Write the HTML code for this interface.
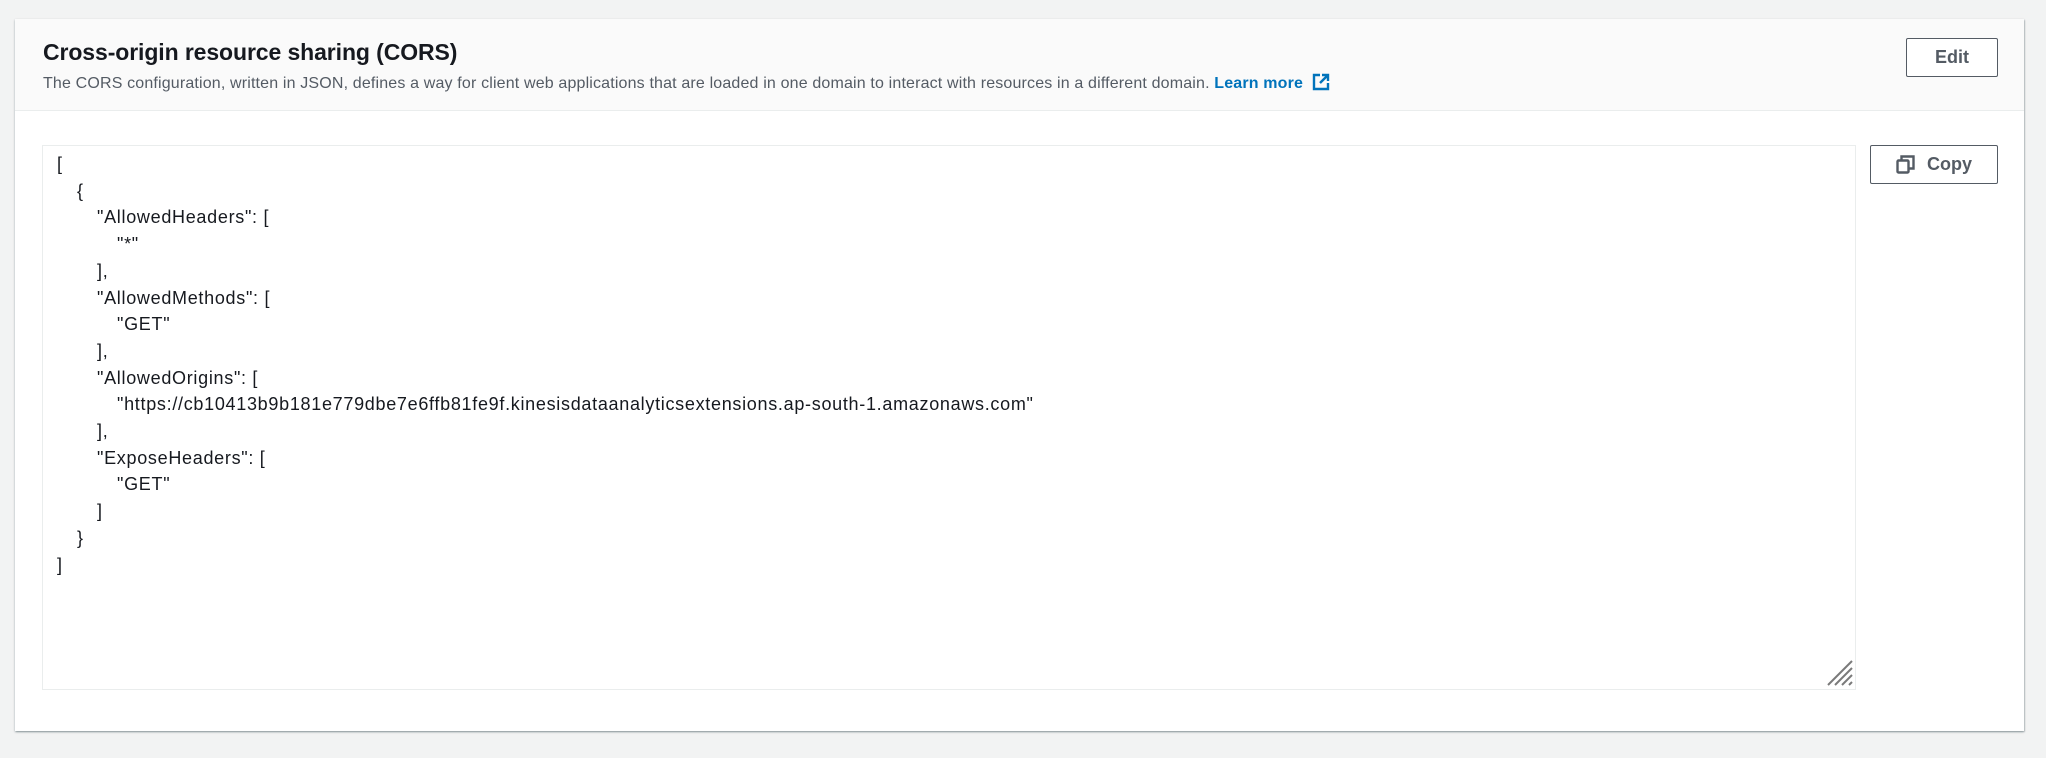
<!DOCTYPE html>
<html><head><meta charset="utf-8"><style>
html,body{margin:0;padding:0;background:#f2f3f3;width:2046px;height:758px;overflow:hidden;font-family:"Liberation Sans",sans-serif;}
.panel{position:absolute;left:15px;top:19px;width:2009px;height:712px;background:#fff;box-shadow:0 1px 2px rgba(0,28,36,.35),1px 1px 1px rgba(0,28,36,.15);}
.hdr{position:absolute;left:0;top:0;width:100%;height:91px;background:#fafafa;border-bottom:1px solid #eaeded;}
.title{position:absolute;left:28px;top:20px;font-size:23px;font-weight:bold;color:#16191f;letter-spacing:-0.1px;}
.desc{position:absolute;left:28px;top:54px;font-size:16px;color:#545b64;letter-spacing:0.16px;}
.desc b{color:#0073bb;}
.btn{position:absolute;border:1px solid #545b64;border-radius:2px;background:#fff;color:#545b64;font-weight:bold;font-size:18px;box-sizing:border-box;display:flex;align-items:center;justify-content:center;}
.ta{position:absolute;left:27px;top:126px;width:1814px;height:545px;border:1px solid #eaeded;box-sizing:border-box;}
.code{position:absolute;left:14px;top:5px;font-size:18px;letter-spacing:0.7px;color:#16191f;line-height:26.7px;white-space:pre;}
.l1{padding-left:20px}.l2{padding-left:40px}.l3{padding-left:60px}
</style></head><body>
<div class="panel">
 <div class="hdr">
  <div class="title">Cross-origin resource sharing (CORS)</div>
  <div class="desc">The CORS configuration, written in JSON, defines a way for client web applications that are loaded in one domain to interact with resources in a different domain. <b>Learn more</b> <svg width="18" height="18" viewBox="0 0 18 18" style="vertical-align:-3px;margin-left:4px"><path d="M8 2H2v14h14v-6" fill="none" stroke="#0073bb" stroke-width="2.4"/><path d="M10 2h6v6M16 2L8 10" fill="none" stroke="#0073bb" stroke-width="2.4"/></svg></div>
  <div class="btn" style="left:1891px;top:19px;width:92px;height:39px;">Edit</div>
 </div>
 <div class="ta"><div class="code"><div>[</div><div class="l1">{</div><div class="l2">"AllowedHeaders": [</div><div class="l3">"*"</div><div class="l2">],</div><div class="l2">"AllowedMethods": [</div><div class="l3">"GET"</div><div class="l2">],</div><div class="l2">"AllowedOrigins": [</div><div class="l3">"https://cb10413b9b181e779dbe7e6ffb81fe9f.kinesisdataanalyticsextensions.ap-south-1.amazonaws.com"</div><div class="l2">],</div><div class="l2">"ExposeHeaders": [</div><div class="l3">"GET"</div><div class="l2">]</div><div class="l1">}</div><div>]</div></div>
 <svg style="position:absolute;right:2px;bottom:3px" width="26" height="26" viewBox="0 0 26 26"><path d="M1 25L25 1M8 25L25 8M15 25L25 15M22 25L25 22" stroke="#7a7a7a" stroke-width="2"/></svg>
 </div>
 <div class="btn" style="left:1855px;top:126px;width:128px;height:39px;"><svg width="19" height="19" viewBox="0 0 19 19" style="margin-right:12px"><rect x="1.5" y="5.5" width="11" height="12" rx="1" fill="none" stroke="#545b64" stroke-width="2.4"/><path d="M5.5 5V1.5h12v12H13" fill="none" stroke="#545b64" stroke-width="2.4"/></svg>Copy</div>
</div>
</body></html>
